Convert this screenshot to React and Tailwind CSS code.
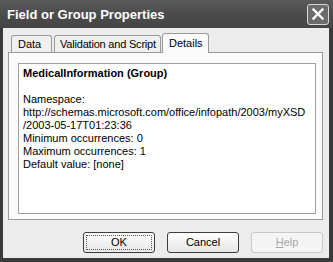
export default function App() {
  const lines = [
    'Namespace:',
    'http://schemas.microsoft.com/office/infopath/2003/myXSD',
    '/2003-05-17T01:23:36',
    'Minimum occurrences: 0',
    'Maximum occurrences: 1',
    'Default value: [none]',
  ];

  return (
    <div className="w-[333px] h-[262px] bg-[#3a3a3a] flex flex-col font-['Liberation_Sans',Arial,sans-serif] text-[11px] text-black">
      {/* title bar */}
      <div className="h-[28px] flex items-center justify-between pl-[7px] pr-[4px] bg-gradient-to-b from-[#5a5a5a] via-[#4c4c4c] to-[#454545]">
        <span className="text-white font-bold text-[13px] leading-none">Field or Group Properties</span>
        <div className="w-[22px] h-[21px] rounded-[3px] border border-[#d8d8d8] bg-[#6b6b6b] flex items-center justify-center">
          <svg width="14" height="14" viewBox="0 0 14 14">
            <path d="M2.5 2.5 L11.5 11.5 M11.5 2.5 L2.5 11.5" stroke="#fff" strokeWidth="2.4" strokeLinecap="square" />
          </svg>
        </div>
      </div>

      {/* body */}
      <div className="flex-1 ml-[3px] mr-[4px] mb-[4px] bg-[#ececec] flex flex-col pl-[5px] pr-[6px] pt-[5px]">
        {/* tabs */}
        <div className="flex items-end h-[19px] pl-[3px] relative z-10 whitespace-nowrap">
          <div className="w-[41px] h-[17px] border border-b-0 border-[#9a9a9a] rounded-t-[3px] bg-[#f0f0f0] flex items-center pl-[6px]">Data</div>
          <div className="ml-[2px] w-[107px] h-[17px] border border-b-0 border-[#9a9a9a] rounded-t-[3px] bg-[#f0f0f0] flex items-center pl-[5px] tracking-[-0.2px]">Validation and Script</div>
          <div className="ml-[1px] w-[47px] h-[20px] -mb-px border border-b-0 border-[#9a9a9a] rounded-t-[3px] bg-[#fbfbfb] flex items-center pl-[6px]">Details</div>
        </div>

        {/* panel */}
        <div className="h-[168px] border border-[#9a9a9a] bg-[#fbfbfb] pl-[9px] pr-[6px] pt-[10px] pb-[5px] flex">
          <div className="flex-1 border border-[#a0a0a0] bg-white pl-[4px] pt-[3px] leading-[13px]">
            <div className="font-bold">MedicalInformation (Group)</div>
            <div className="h-[13px]" />
            {lines.map((l) => (
              <div key={l} className="whitespace-nowrap">{l}</div>
            ))}
          </div>
        </div>

        {/* buttons */}
        <div className="flex justify-end gap-[12px] mt-[12px]">
          <button className="w-[72px] h-[21px] rounded-[3px] border border-[#3c3c3c] bg-gradient-to-b from-white to-[#e6e6e6] p-[2px]">
            <div className="w-full h-full border border-dotted border-[#555] flex items-center justify-center">OK</div>
          </button>
          <button className="w-[72px] h-[21px] rounded-[3px] border border-[#3c3c3c] bg-gradient-to-b from-white to-[#e6e6e6] flex items-center justify-center">Cancel</button>
          <button className="w-[72px] h-[21px] rounded-[3px] border border-[#c8c8c8] bg-[#f4f4f4] text-[#a8a8a8] flex items-center justify-center">
            <span><span className="underline">H</span>elp</span>
          </button>
        </div>
      </div>
    </div>
  );
}
